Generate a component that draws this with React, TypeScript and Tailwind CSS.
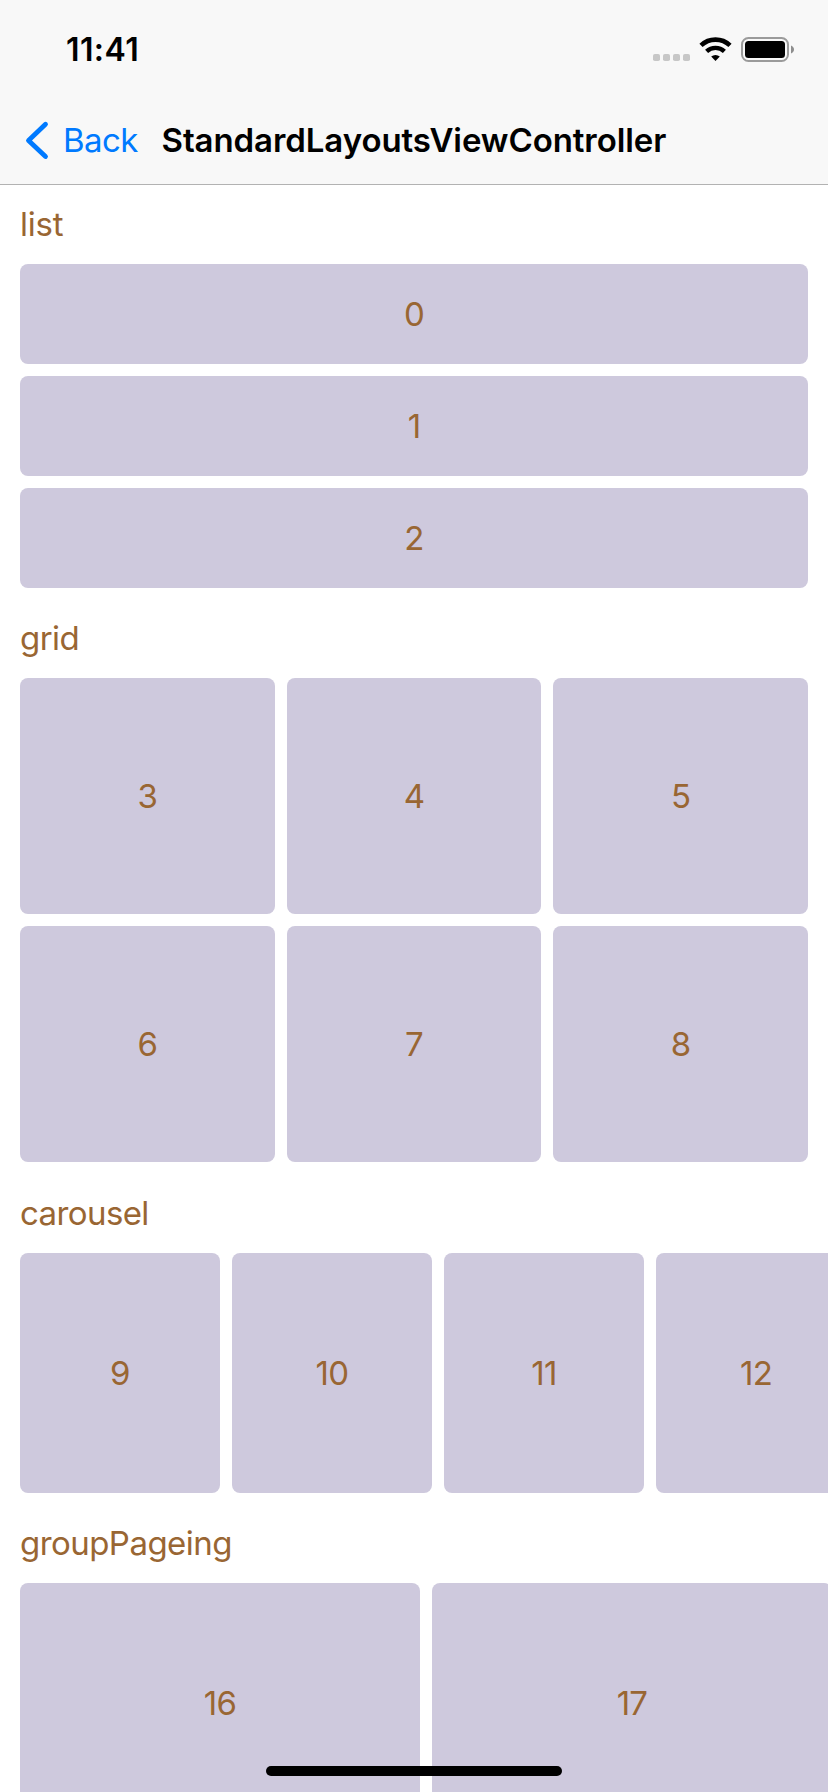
import type { ReactNode } from "react";

function Card({ label, className }: { label: number; className: string }) {
  return (
    <div
      className={`flex items-center justify-center rounded-lg bg-[#cec9dd] text-[33px] leading-[40px] tracking-[-0.7px] text-[#996633] ${className}`}
    >
      {label}
    </div>
  );
}

function Section({ title, className, children }: { title: ReactNode; className: string; children: ReactNode }) {
  return (
    <section>
      <h2 className={`flex items-end pb-5 pl-5 text-[33px] leading-[40px] text-[#996633] ${className}`}>{title}</h2>
      {children}
    </section>
  );
}

function StatusBar() {
  return (
    <div className="flex h-[96px] items-start justify-between pr-[34px] pl-[66px]">
      <span className="mt-[31px] text-[32px] leading-[38px] font-semibold tracking-[0.4px]">11:41</span>
      <svg className="mt-[34px]" width="142" height="30" viewBox="652 34 142 30">
        <g fill="#c7c7c7">
          <rect x="653" y="54" width="7" height="7" rx="1.8" />
          <rect x="663" y="54" width="7" height="7" rx="1.8" />
          <rect x="673" y="54" width="7" height="7" rx="1.8" />
          <rect x="683" y="54" width="7" height="7" rx="1.8" />
        </g>
        <g fill="none" stroke="#000">
          <path d="M701 45.4a21 21 0 0 1 29 0" strokeWidth="4.6" />
          <path d="M706.6 51.4a13 13 0 0 1 17.8 0" strokeWidth="4.4" />
        </g>
        <path d="M711.2 56.6a6.4 6.4 0 0 1 8.6 0l-4.3 4.4z" fill="#000" />
        <rect x="742" y="38" width="46" height="23" rx="6.5" fill="none" stroke="#9b9b9b" strokeWidth="2" />
        <rect x="745" y="41" width="40" height="17" rx="3.5" />
        <path d="M791 45.5c4 1.4 4 6.6 0 8z" fill="#8e8e8e" />
      </svg>
    </div>
  );
}

function NavigationBar() {
  return (
    <div className="flex h-[88px] items-center pl-[25px]">
      <svg width="24" height="40" viewBox="0 0 24 40" fill="none" stroke="#007aff" strokeWidth="4.8" strokeLinecap="round" strokeLinejoin="round">
        <path d="M20.5 4.2L3.5 20.5L20.5 36.5" />
      </svg>
      <span className="ml-[14px] w-[98.5px] text-[33px] leading-[40px] tracking-[-0.6px] text-[#007aff]">Back</span>
      <h1 className="text-[33px] leading-[40px] font-semibold tracking-[-0.08px]">StandardLayoutsViewController</h1>
    </div>
  );
}

export default function App() {
  return (
    <div className="relative h-[1792px] w-[828px] overflow-hidden bg-white font-['Inter',sans-serif] text-black">
      <header className="h-[185px] border-b border-[#b2b2b2] bg-[#f8f8f8]">
        <StatusBar />
        <NavigationBar />
      </header>

      <main className="flex flex-col">
        <Section title="list" className="h-[79px] tracking-[-0.2px]">
          <div className="flex flex-col gap-3 px-5">
            {[0, 1, 2].map((n) => (
              <Card key={n} label={n} className="h-[100px]" />
            ))}
          </div>
        </Section>

        <Section title="grid" className="h-[90px] tracking-[-0.55px]">
          <div className="grid grid-cols-3 gap-3 px-5">
            {[3, 4, 5, 6, 7, 8].map((n) => (
              <Card key={n} label={n} className="h-[236px]" />
            ))}
          </div>
        </Section>

        <Section title="carousel" className="h-[91px] tracking-[-0.6px]">
          <div className="flex gap-3 overflow-hidden pl-5">
            {[9, 10, 11, 12].map((n) => (
              <Card key={n} label={n} className="h-[240px] w-[200px] shrink-0" />
            ))}
          </div>
        </Section>

        <Section title="groupPageing" className="h-[90px] tracking-[-0.55px]">
          <div className="flex gap-3 overflow-hidden pl-5">
            {[16, 17].map((n) => (
              <Card key={n} label={n} className="h-[240px] w-[400px] shrink-0" />
            ))}
          </div>
        </Section>
      </main>

      <div className="absolute bottom-4 left-1/2 h-[10px] w-[296px] -translate-x-1/2 rounded-full bg-black" />
    </div>
  );
}
